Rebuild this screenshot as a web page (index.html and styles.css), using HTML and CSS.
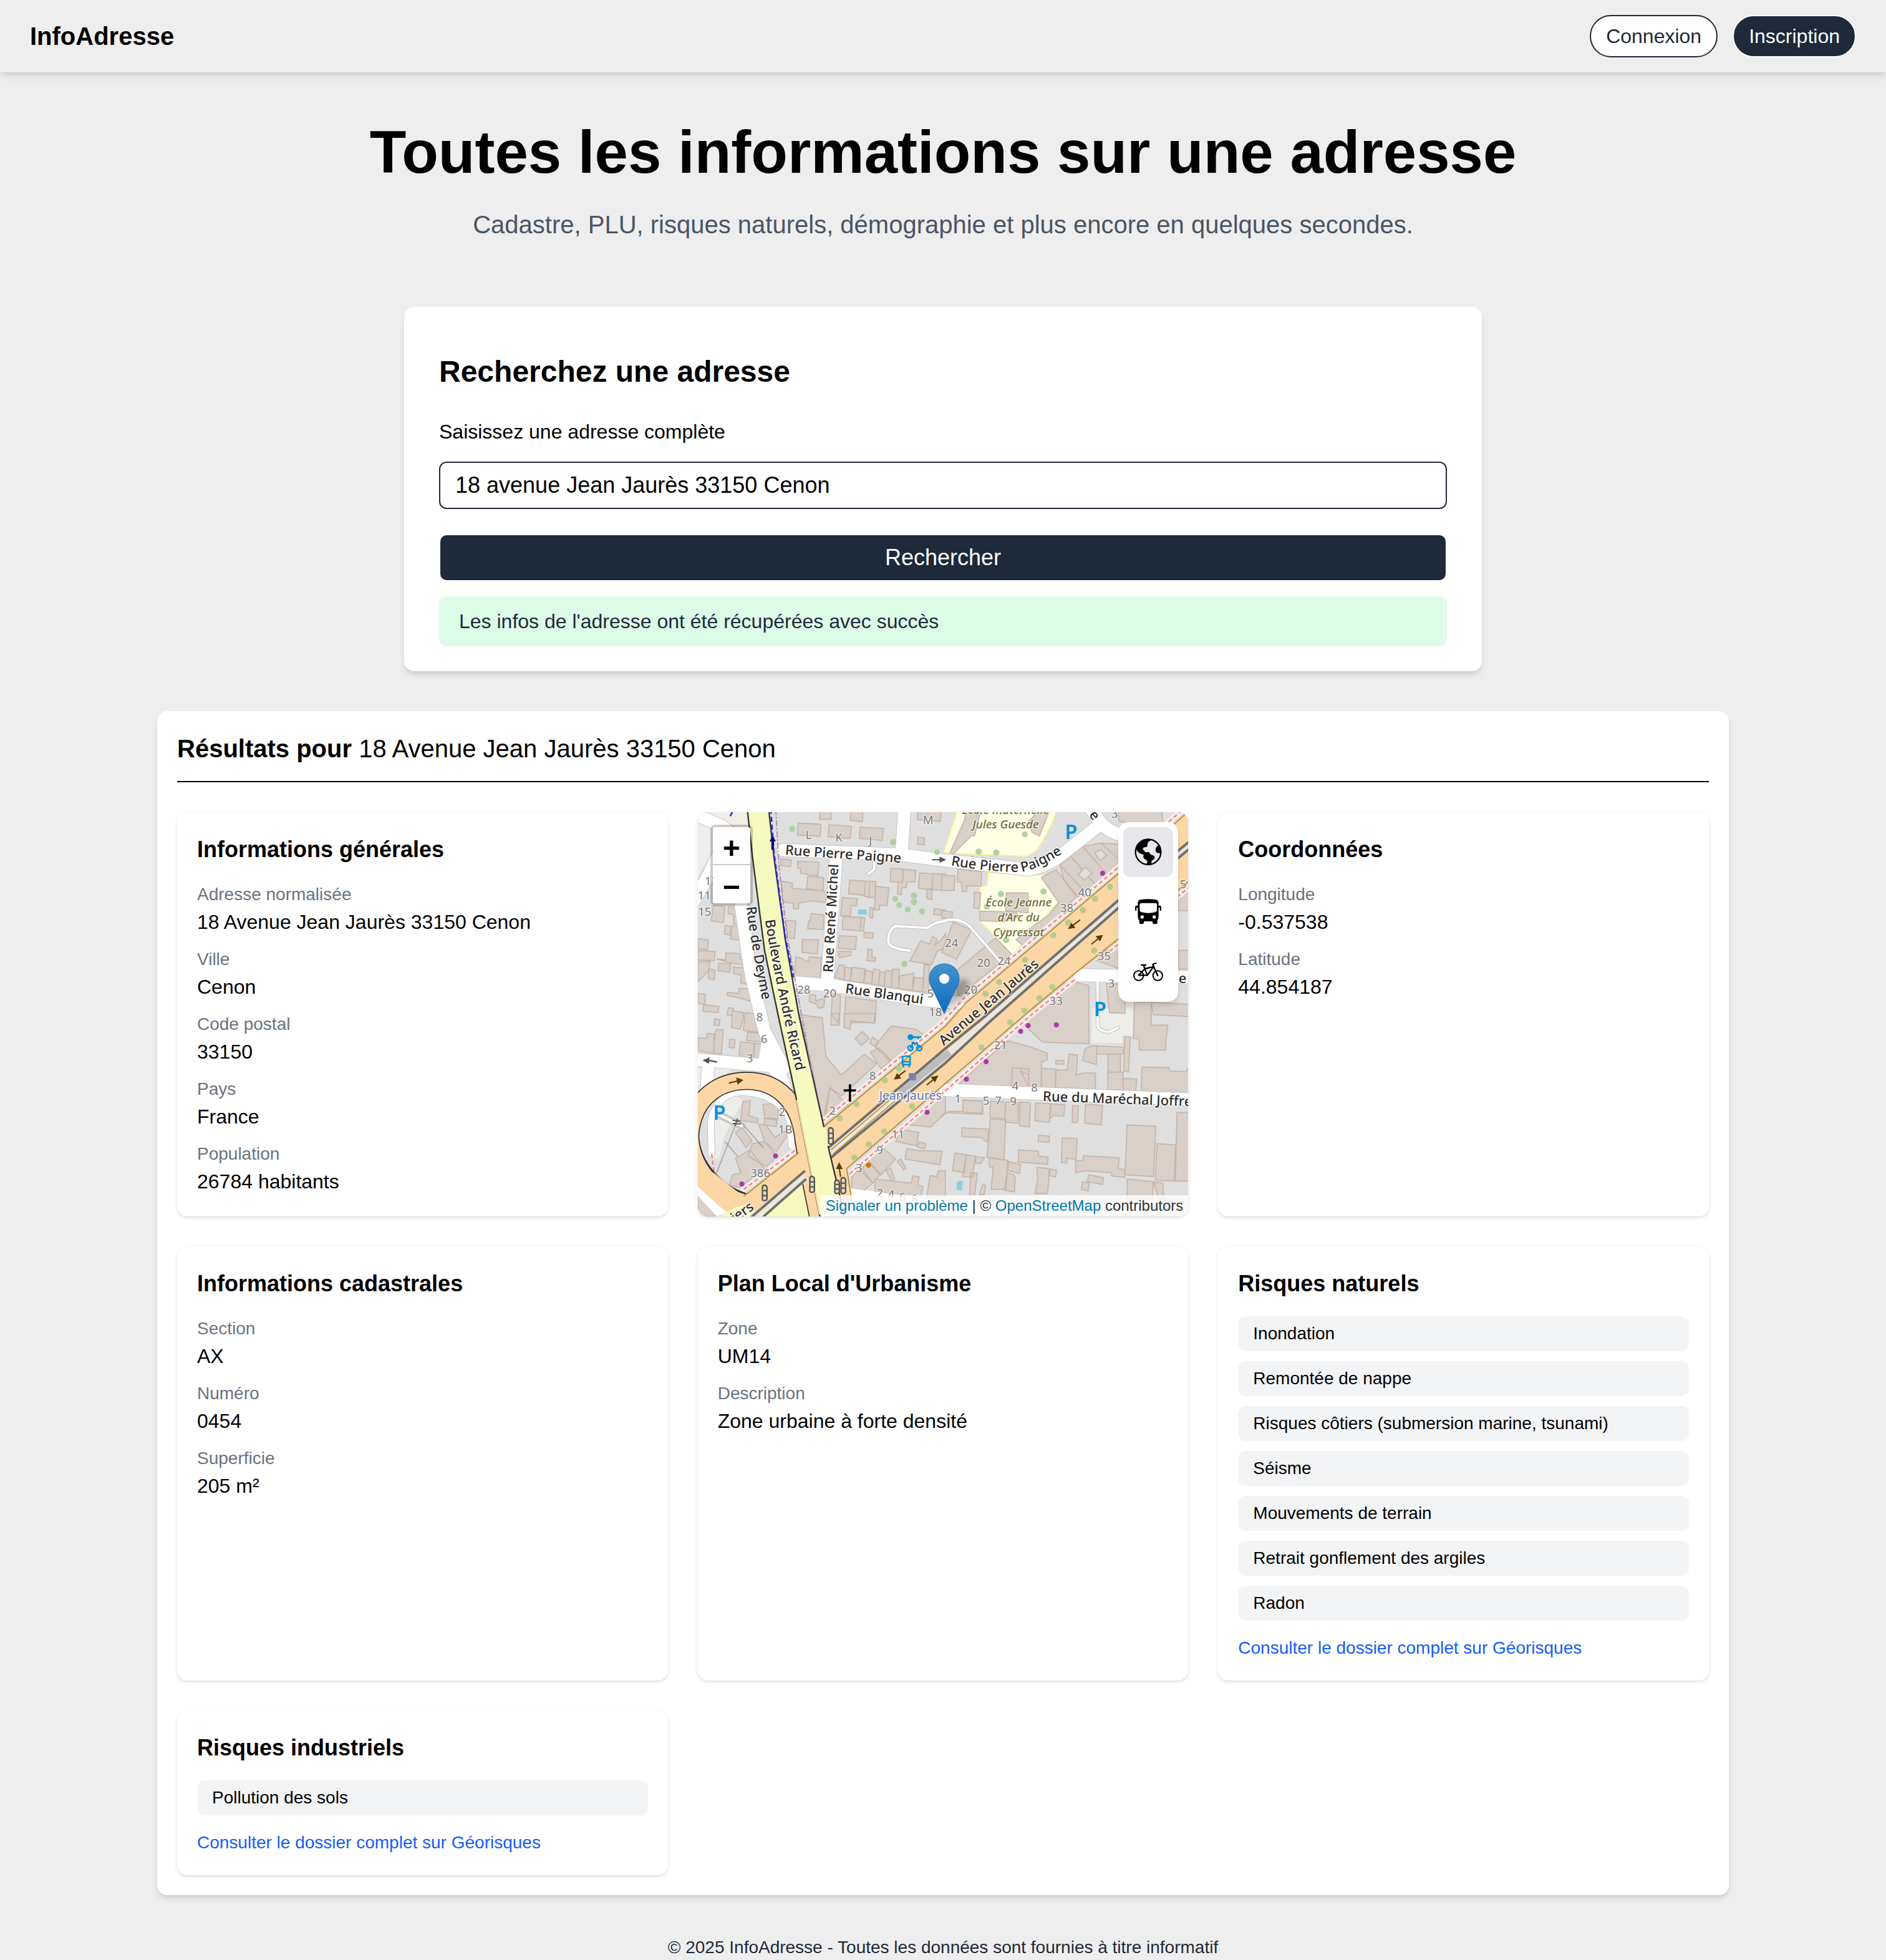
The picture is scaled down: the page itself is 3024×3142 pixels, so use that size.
FILE: index.html
```html
<!DOCTYPE html>
<html lang="fr">
<head>
<meta charset="utf-8">
<meta name="viewport" content="width=device-width, initial-scale=1">
<title>InfoAdresse</title>
<link rel="stylesheet" href="styles.css">
</head>
<body>
<header class="topbar">
  <a class="brand" href="#">InfoAdresse</a>
  <nav class="topbar-actions" aria-label="Compte">
    <button class="pill pill-outline" type="button">Connexion</button>
    <button class="pill pill-solid" type="button">Inscription</button>
  </nav>
</header>

<main class="page">
  <section class="hero">
    <h1>Toutes les informations sur une adresse</h1>
    <p>Cadastre, PLU, risques naturels, démographie et plus encore en quelques secondes.</p>
  </section>

  <section class="search">
    <h2>Recherchez une adresse</h2>
    <form class="search-form">
      <label for="adresse">Saisissez une adresse complète</label>
      <input id="adresse" type="text" value="18 avenue Jean Jaurès 33150 Cenon">
      <button type="submit">Rechercher</button>
    </form>
    <p class="alert" role="status">Les infos de l'adresse ont été récupérées avec succès</p>
  </section>

  <section class="results">
    <h2 class="results-title">Résultats pour <span>18 Avenue Jean Jaurès 33150 Cenon</span></h2>
    <div class="grid">
      <article class="card">
        <h3>Informations générales</h3>
        <dl>
          <div><dt>Adresse normalisée</dt><dd>18 Avenue Jean Jaurès 33150 Cenon</dd></div>
          <div><dt>Ville</dt><dd>Cenon</dd></div>
          <div><dt>Code postal</dt><dd>33150</dd></div>
          <div><dt>Pays</dt><dd>France</dd></div>
          <div><dt>Population</dt><dd>26784 habitants</dd></div>
        </dl>
      </article>

      <article class="card map">
        <svg class="map-canvas" viewBox="9 36 2361 1944" preserveAspectRatio="xMidYMid slice" aria-label="Plan du quartier">
          <defs>
            <path id="paigne" d="M1226 292Q1400 322 1562 324Q1650 314 1830 190"/>
            <path id="deyme" d="M243 492Q270 710 330 990"/>
            <path id="ricard" d="M333 555Q380 860 500 1360"/>
            <filter id="soft" x="-50%" y="-50%" width="200%" height="200%"><feGaussianBlur stdDeviation="12"/></filter>
          </defs>
          <rect x="0" y="0" width="2400" height="2000" fill="#dfdfdf"/>
          <path fill="#eee" d="M0 36H60L140 100 60 260 0 360Z"/>
          <path fill="#f2eee7" d="M60 36H250L262 130H180Z"/>
          <path fill="#ededea" d="M1905 980H2102V1110H2050V1145H1902ZM10 1265H75L60 1400H10ZM75 1265H180L60 1370ZM75 1480Q100 1400 190 1395L225 1425 135 1600 110 1705 60 1690Z"/>

          <!-- schools -->
          <g fill="#ffffe5" stroke="#f7f58c" stroke-width="5">
            <path d="M1257 30H1735Q1700 130 1652 200Q1620 245 1580 248L1192 232Z"/>
            <path d="M1407 325L1692 340L1755 450L1522 722L1367 560V390H1400Z"/>
          </g>

          <!-- buildings -->
          <g fill="#d9d0c9" stroke="#c6b5aa" stroke-width="5">
            <path d="M598 20H650V70H594ZM745 20H804L800 82 742 74ZM492 88L602 94 598 152 488 146ZM640 96L748 104 742 162 636 154ZM790 108L902 114 896 172 786 162ZM1065 20H1180L1175 80 1065 72ZM1068 156L1100 160 1098 193 1066 190Z"/>
            <path d="M408 260L458 266 455 298 406 292ZM490 272L592 276 586 342 504 330 502 306 488 304ZM538 344L615 350 612 414 532 404ZM412 368L464 376 462 402 612 414 628 418 622 470 552 462 494 474V500H470L468 474 418 468Z"/>
            <path d="M740 362L816 368 810 436 734 428ZM816 368H838L832 446 810 440ZM838 368L864 370 862 446H832ZM866 392L928 400 920 486 884 482 882 506H858ZM704 446L776 452 772 486 746 484 744 536 696 534ZM838 494L854 498 850 546 834 540ZM708 538L794 542 790 606 704 600ZM794 542L812 544 806 608 790 606ZM810 614L854 618 850 642 808 640ZM690 630L772 634 768 696 684 690ZM684 706H746V724L690 736ZM828 694L848 698 846 732 864 736 862 754 822 750Z"/>
            <path d="M938 306L996 310 994 374 934 370ZM998 310L1058 316 1054 370 1016 372 1012 398 990 400 988 432 970 430 972 374 994 374ZM1076 328L1140 332 1136 410 1070 402ZM1140 332H1200V410H1136ZM1112 410L1136 400 1134 456 1110 450ZM1146 500L1200 506V534L1144 528ZM1082 654L1124 670 1138 634 1160 646 1150 674 1180 650 1200 620V690L1160 706 1134 770 1028 752Z"/>
            <path d="M554 524L616 530 612 600 538 596 542 560H550ZM434 556L480 560 474 644 440 640ZM512 648L590 650 584 718 510 710ZM480 732L514 740 526 754 544 750 546 732 604 736 598 836 474 828Z"/>
            <path d="M690 770L716 774 712 842 668 830ZM718 782L748 786 742 850 712 844ZM752 782L814 790 806 856 742 850ZM816 796L850 802 846 862 808 856ZM854 790L884 794 878 870 846 862ZM886 804L910 806 906 872 878 870ZM912 796L944 800 940 880 906 874ZM946 790L978 792 974 884 940 880ZM980 824L1048 810 1040 894 974 884ZM1052 830L1096 836 1090 900 1040 894ZM1098 770H1124L1116 902H1090Z"/>
            <path d="M82 486L140 490 132 568 74 558ZM156 490L226 494 222 540 206 576 182 572 180 528 154 524ZM140 580L170 586 164 628 138 622ZM172 582L244 590 240 656 166 646ZM10 644L60 650 56 698 10 692ZM10 700L92 706 88 750 10 746ZM110 762L168 766 162 806 106 798ZM10 754H68L62 800 10 850ZM62 790L92 794 88 842 60 836ZM100 742L144 746V712L212 716V742L240 746 236 770 174 762ZM180 780L276 790 270 866 216 858 218 820 182 812ZM10 908L46 912 42 960 10 955ZM36 962L110 970 106 1000 34 994ZM208 884L284 886V950L180 922 150 918 152 902 206 908ZM156 976L182 980 178 1016 150 1010Z"/>
            <path d="M548 912L576 916V944L620 930 616 972 590 980 580 960 544 946ZM656 912L696 916 690 1060H648ZM720 924L868 944 862 1048H714Z"/>
            <path d="M90 1030L116 1034 112 1062 86 1060ZM176 990L230 1000 226 1040 212 1080 170 1070ZM238 1000L320 1010 316 1096 228 1086ZM248 1094L326 1102 322 1140 244 1134ZM162 1128L188 1130 184 1170 160 1168ZM214 1140L280 1146 276 1220 208 1210ZM284 1148L346 1152 340 1226 276 1220ZM100 1080L132 1084 122 1200 86 1196 88 1110ZM54 1100L92 1104 84 1194 10 1184V1120L50 1124Z"/>
            <path d="M498 1010L608 1024 625 1210 700 1300 810 1200 870 1246 700 1400 645 1360 610 1530 560 1270ZM650 1005H690L682 1050ZM714 1005H862L856 1050 744 1040 742 1082 712 1070ZM800 1090L834 1124 796 1158 766 1124ZM850 1118L880 1140 862 1166 836 1146ZM940 1064L1060 1080 1100 1110 940 1240 860 1160ZM840 1190L880 1170 940 1230 890 1270ZM645 1360L745 1460 612 1560Z"/>
            <path d="M1300 30H1370L1340 150H1325L1240 235 1222 230 1290 80ZM1600 80L1650 30H1700L1652 150 1615 130ZM2030 30H2240L2250 110 2035 80Z"/>
            <path d="M1260 310L1374 322 1372 392 1304 390 1302 418 1280 416 1278 374 1258 370ZM1182 340L1246 342 1242 412 1182 414ZM1340 420L1370 424 1364 500 1336 496ZM1492 424H1598V520L1490 510ZM1366 512L1540 516 1550 540 1480 562 1366 558ZM1238 564L1326 602 1254 744 1182 710ZM1442 640L1518 720 1262 920 1250 800ZM1662 350L1732 312 1830 440 1660 620 1590 690 1540 650 1640 570 1700 530 1745 470ZM1752 290L1860 200 1950 184 2040 190V300L1850 460 1770 360ZM1182 510L1236 516 1230 545H1182Z"/>
            <path fill="none" d="M1752 290L1880 430M1800 245L1930 395M1860 200L1990 350M1950 184L2040 270"/>
            <path fill="#dfdfdf" d="M1838 338L1872 300 1905 330 1868 362ZM1918 232L1948 216 1975 244 1945 268Z"/>
            <path d="M1930 750L2000 660H2040V790ZM1690 870L1830 855 1890 870V1010L1890 1150 1668 1142 1580 1060ZM1974 860L2064 864V1004L1990 1000ZM2110 950H2190V1060H2270L2260 1140V1180H2132V1125H2104ZM2320 420H2370V510H2320ZM2320 700H2370V790H2320ZM2190 950L2370 960V1018L2200 1010Z"/>
            <path d="M1500 1135L1612 1166 1690 1195V1225L1662 1240V1360L1265 1345 1290 1320 1370 1245ZM1522 1266L1602 1270 1600 1358 1518 1350ZM1562 1280L1600 1300V1356ZM1730 1230H1770V1248H1732ZM1662 1268L1732 1272 1728 1362H1660ZM1732 1276H1786L1795 1200 1836 1204 1830 1300 1862 1290H1922V1368L1730 1360ZM1872 1175L1898 1160H1928V1220L1926 1250 1860 1230ZM1928 1160L2058 1166 2054 1200H1928ZM1982 1200H2042V1286H1982ZM1982 1286H2054V1372L1980 1370ZM2062 1116L2090 1118 2080 1286 2058 1280ZM2056 1316L2120 1320 2116 1376H2054ZM2146 1262L2276 1264 2280 1280 2354 1284 2370 1266V1386L2142 1378Z"/>
            <path d="M1182 1500L1216 1475H1284V1420L1380 1424V1490L1184 1480ZM1284 1422L1380 1426 1376 1484 1286 1478ZM1416 1426L1490 1430 1486 1510 1414 1504ZM1490 1430L1554 1434 1548 1532 1488 1526ZM1560 1430L1610 1434 1604 1550 1556 1544ZM1634 1434L1706 1438 1700 1528 1630 1520ZM1708 1438L1774 1444 1770 1498 1720 1494 1702 1510ZM1812 1446L1840 1450 1836 1528H1810ZM1874 1440L1956 1446 1950 1540 1870 1532ZM1280 1554L1408 1560 1404 1624 1370 1600 1278 1596ZM1416 1512L1490 1516 1482 1708 1400 1696ZM1648 1590L1700 1594V1624L1646 1620ZM1762 1602L1834 1606 1828 1706 1784 1700V1724L1758 1720ZM1552 1660L1648 1666V1690L1694 1694 1692 1730 1550 1718ZM1864 1688L2036 1698 2032 1750 2062 1754V1792L2000 1786V1770L1870 1760 1826 1770V1712H1862ZM2074 1540L2212 1546 2202 1788 2064 1780ZM2218 1630L2308 1636 2300 1810 2210 1806ZM2314 1480H2370V1810H2306Z"/>
            <path d="M1246 1676L1300 1682 1290 1770 1234 1760ZM1302 1684L1344 1690 1330 1792 1282 1788ZM1344 1692L1388 1698 1370 1726 1344 1722ZM1412 1700L1500 1710 1492 1850 1420 1850 1430 1744 1410 1740ZM1504 1716L1562 1730 1556 1774 1500 1760ZM1496 1770L1530 1780 1536 1800 1532 1862 1484 1854ZM1640 1744L1700 1750 1692 1870 1632 1870 1644 1800ZM1706 1752L1734 1756 1730 1790 1700 1784ZM1890 1780L1960 1794 1956 1826 1882 1812ZM1860 1812L1892 1820 1886 1858 1854 1850ZM2074 1800L2200 1812 2196 1900H2074ZM2202 1814L2246 1820 2250 1900H2226ZM1322 1770L1354 1774 1340 1880H1316ZM1380 1824L1394 1830 1386 1876H1362Z"/>
            <path d="M225 1428L262 1424 255 1496 300 1510 296 1530 216 1518ZM322 1440L398 1436 394 1510 332 1506ZM330 1508L390 1516 386 1548 328 1540ZM302 1536L336 1540 380 1600 430 1570 434 1600 386 1668 330 1620ZM190 1576L222 1552 270 1616 242 1650ZM272 1630L330 1620 390 1690 340 1740 250 1690ZM190 1700L260 1660 330 1750 210 1840 160 1830 176 1780 216 1770ZM10 1870L100 1950 90 1980H10Z"/>
            <path d="M1200 1480L1130 1550 1030 1540 1110 1460 1200 1385ZM980 1560L1072 1576 1062 1640 962 1620ZM1074 1622L1108 1632 1098 1656 1066 1646ZM1014 1654L1074 1664 1184 1666 1174 1732 1006 1704ZM986 1704L1010 1748 1000 1756 968 1716ZM900 1650L960 1704 890 1780 830 1710ZM826 1712L886 1780 850 1820 800 1750ZM786 1750L850 1820 800 1860H750V1790ZM916 1760L936 1746 956 1800 940 1810ZM862 1800L1036 1820 1044 1784 1074 1790 1068 1830 1092 1836 1080 1890 860 1860ZM1126 1784L1160 1788 1166 1760H1200V1880L1110 1890Z"/>
          </g>

          <!-- small streets -->
          <g fill="none" stroke="#c9c6c3" stroke-linecap="round" stroke-linejoin="round">
            <path stroke-width="18" d="M1200 560Q1160 560 1115 592L960 584Q925 600 925 660Q930 692 1030 702M1200 556Q1280 540 1330 600L1462 752M858 270V310L830 332M1932 850V1060Q1940 1092 1990 1092L2030 1072"/>
            <path stroke-width="66" d="M1004 20L990 215M675 250L630 870M470 855L660 870L1100 940L1262 952M205 400L262 800Q300 960 330 1090L410 1240M-10 1225L430 1262M58 1270L50 1400M1200 1372L2400 1418M1850 820L2400 830"/>
            <path stroke-width="66" d="M420 218L980 240L1182 266L1600 312Q1680 300 1760 240L1950 90L1900 20M1950 90Q2010 150 2080 150M-20 40L120 100L160 130L60 340L-20 480"/>
            <path stroke-width="36" d="M75 1680L72 1520Q90 1440 150 1400Q200 1370 290 1390Q420 1420 455 1530L460 1640M110 1490L220 1545"/>
          </g>
          <g fill="none" stroke="#fff" stroke-linecap="round" stroke-linejoin="round">
            <path stroke-width="11" d="M1200 560Q1160 560 1115 592L960 584Q925 600 925 660Q930 692 1030 702M1200 556Q1280 540 1330 600L1462 752M858 270V310L830 332M1932 850V1060Q1940 1092 1990 1092L2030 1072"/>
            <path stroke-width="60" d="M1004 20L990 215M675 250L630 870M470 855L660 870L1100 940L1262 952M205 400L262 800Q300 960 330 1090L410 1240M-10 1225L430 1262M58 1270L50 1400M1200 1372L2400 1418M1850 820L2400 830"/>
            <path stroke-width="60" d="M420 218L980 240L1182 266L1600 312Q1680 300 1760 240L1950 90L1900 20M1950 90Q2010 150 2080 150M-20 40L120 100L160 130L60 340L-20 480"/>
            <path stroke-width="30" d="M75 1680L72 1520Q90 1440 150 1400Q200 1370 290 1390Q420 1420 455 1530L460 1640"/>
            <path stroke-width="14" d="M110 1490L220 1545"/>
          </g>
          <path fill="#fff" d="M330 1050L420 1250 470 1400 365 1300 300 1240ZM740 1845L1200 1905 1500 1960V2000H740ZM0 1800Q60 1900 150 1960L100 1980 0 1870Z"/>

          <!-- avenue -->
          <g fill="none" stroke="#f4efeb" stroke-width="26">
            <path d="M205 1870L505 1640M605 1525L1185 1048L1290 930L2010 320L2400 -30M740 1775L1235 1345L1620 1005L1830 835M1990 705L2400 375"/>
          </g>
          <g fill="none" stroke="#fb8a86" stroke-width="8" stroke-dasharray="20 12">
            <path d="M205 1870L505 1640M605 1525L1185 1048L1290 930L2010 320L2400 -30M740 1775L1235 1345L1620 1005L1830 835M1990 705L2400 375M76 1680L90 1790 160 1860 210 1880"/>
          </g>
          <path fill="#f7fabf" d="M120 1980L300 1900 520 1790 560 1990H120Z"/>
          <path fill="#fcd6a4" stroke="#b8913c" stroke-width="6" d="M230 1883L520 1655L620 1545L1200 1065L1302 950L2027 335L2400 5V345L2032 645L1812 820L1612 985L1212 1330L725 1750L750 1900H560L520 1780L270 1980L100 1900Z"/>
          <path fill="none" stroke="#333" stroke-width="88" d="M230 1910C100 1870 -25 1740 -28 1590C-15 1400 120 1328 245 1328C400 1328 490 1440 512 1570C530 1700 550 1800 590 1990"/>
          <path fill="none" stroke="#fcd6a4" stroke-width="78" d="M240 1915C90 1880 -25 1740 -28 1590C-15 1400 120 1328 245 1328C400 1328 490 1440 512 1570C530 1700 550 1800 590 1990"/>
          <path fill="#fcd6a4" d="M85 1770L232 1886L516 1660L545 1770L280 1978L150 1960L0 1830V1740Z"/>
          <path fill="none" stroke="#b8913c" stroke-width="5" d="M230 1883L495 1672"/>
          <path fill="#f7fabf" d="M115 1982L190 1935L250 1925L290 1960L270 1990H115Z"/>
          <g fill="none">
            <path stroke="#ece6db" stroke-width="34" d="M270 1985L530 1790M650 1670L1200 1210L1400 1035L2032 478L2400 175"/>
            <path stroke="#b8913c" stroke-width="5" d="M650 1660L1190 1200M660 1680L1190 1225"/>
            <path stroke="#bdbdbd" stroke-width="34" d="M985 1380L1220 1190"/>
            <path stroke="#707070" stroke-width="12" d="M265 1985L525 1760M320 1985L530 1800M640 1648L1200 1172L1382 1025L2032 460L2400 155M650 1697L1200 1242L1412 1045L2036 493L2400 190"/>
          </g>

          <!-- boulevard -->
          <path fill="#f7fabf" stroke="#333" stroke-width="7" d="M247 20L272 250L330 700L395 1010L480 1400L600 2000H715L690 1870L640 1660L610 1525L495 1010L430 650L375 250L350 20Z"/>
          <path fill="none" stroke="#f7fabf" stroke-width="12" d="M488 1420L598 1970M616 1550L638 1640"/>
          <path fill="none" stroke="#fcd6a4" stroke-width="6" d="M486 1420L596 1970"/>
          <path fill="none" stroke="#2a2ae0" stroke-width="8" stroke-dasharray="24 14" d="M360 20L375 230L430 640L470 830M165 55L178 30"/>
          <path fill="none" stroke="#b48fb8" stroke-width="6" stroke-dasharray="30 8 8 8" d="M384 20L400 300L440 640L480 860L560 1290"/>
          <path fill="#00007f" d="M369 148L384 176H375V216H363V176H354Z"/>

          <!-- trees, pools, shops -->
          <g fill="#aed1a0">
            <circle cx="463" cy="116" r="15"/><circle cx="949" cy="180" r="15"/><circle cx="1160" cy="228" r="14"/><circle cx="959" cy="453" r="14"/><circle cx="978" cy="483" r="14"/><circle cx="1049" cy="437" r="15"/><circle cx="1049" cy="468" r="15"/><circle cx="1019" cy="504" r="14"/><circle cx="1088" cy="513" r="15"/><circle cx="1002" cy="766" r="15"/><circle cx="1582" cy="142" r="14"/><circle cx="1360" cy="226" r="15"/><circle cx="1445" cy="230" r="15"/><circle cx="1467" cy="430" r="15"/><circle cx="1672" cy="418" r="15"/><circle cx="1400" cy="490" r="15"/><circle cx="1492" cy="650" r="15"/>
          </g>
          <g fill="#b8cb8e">
            <circle cx="1992" cy="395" r="15"/><circle cx="1920" cy="453" r="15"/><circle cx="1861" cy="507" r="15"/><circle cx="1791" cy="567" r="15"/><circle cx="1719" cy="628" r="15"/><circle cx="1916" cy="701" r="15"/><circle cx="1583" cy="746" r="15"/><circle cx="1459" cy="853" r="15"/><circle cx="1393" cy="910" r="15"/><circle cx="1714" cy="877" r="15"/><circle cx="1652" cy="930" r="15"/><circle cx="1580" cy="990" r="15"/><circle cx="1512" cy="1047" r="15"/><circle cx="1374" cy="1167" r="15"/><circle cx="976" cy="1268" r="15"/><circle cx="909" cy="1325" r="15"/><circle cx="773" cy="1439" r="15"/><circle cx="692" cy="1508" r="15"/><circle cx="1040" cy="1451" r="15"/><circle cx="905" cy="1571" r="15"/><circle cx="832" cy="1633" r="15"/><circle cx="762" cy="1698" r="15"/>
          </g>
          <path fill="#8bd0e2" d="M780 504H822V528H780ZM1256 1812L1284 1808 1280 1856 1252 1852Z"/>
          <g fill="#ac39ac">
            <circle cx="1956" cy="330" r="12"/><circle cx="1562" cy="1090" r="12"/><circle cx="1598" cy="1062" r="12"/><circle cx="1734" cy="1059" r="12"/><circle cx="1396" cy="1236" r="12"/><circle cx="1301" cy="1320" r="12"/><circle cx="1112" cy="1479" r="12"/><circle cx="383" cy="1689" r="12"/><circle cx="221" cy="1824" r="12"/>
          </g>
          <circle cx="830" cy="1733" r="12" fill="#cb7000"/>

          <!-- direction arrows -->
          <g fill="#583c00" stroke="#583c00" stroke-width="6">
            <path d="M1848 554L1810 583M1902 671L1938 642M1008 1279L972 1306M1110 1348L1146 1319M158 1339L198 1329M696 1790L690 1750"/>
            <path stroke="none" d="M1790 598L1806 568L1826 592ZM1958 626L1944 658L1922 632ZM952 1322L968 1290L988 1316ZM1166 1302L1150 1336L1130 1310ZM228 1324L194 1312L200 1346ZM689 1719L674 1752L706 1752Z"/>
          </g>
          <path fill="#555" d="M1136 262H1172V250L1204 265 1172 280V268H1136ZM32 1229L66 1214 64 1226 102 1234 100 1241 64 1234 62 1246Z"/>

          <!-- signals, church, stops -->
          <g fill="#e8d9b8" stroke="#555" stroke-width="7">
            <path d="M638 1566Q638 1554 648 1554T660 1566V1620Q660 1632 648 1632T638 1620ZM548 1800Q548 1788 558 1788T570 1800V1852Q570 1864 558 1864T548 1852ZM320 1842Q320 1830 330 1830T342 1842V1892Q342 1904 330 1904T320 1892ZM698 1806Q698 1794 708 1794T720 1806V1858Q720 1870 708 1870T698 1858ZM668 1818Q668 1806 678 1806T690 1818V1858Q690 1870 678 1870T668 1858Z"/>
            <path d="M638 1580H660M638 1604H660M548 1814H570M548 1838H570M320 1856H342M320 1880H342M698 1820H720M698 1844H720M668 1826H690M668 1848H690"/>
          </g>
          <path fill="none" stroke="#000" stroke-width="11" d="M741 1345V1428M711 1374H770"/>
          <path fill="none" stroke="#555" stroke-width="6" d="M176 1518L214 1522M178 1532L216 1536M188 1545L200 1510"/>
          <path fill="none" stroke="#999" stroke-width="4" d="M140 1620L200 1690M186 1550L96 1780M215 1525L325 1650"/>
          <g fill="none" stroke="#0092da" stroke-width="8">
            <circle cx="1032" cy="1171" r="12"/><circle cx="1074" cy="1171" r="12"/><path d="M1032 1171L1044 1148H1064L1074 1171M1038 1144H1050M1062 1140V1150M1040 1118H1084M1070 1118V1128"/>
            <path d="M994 1212Q1012 1206 1030 1212V1250H994ZM994 1236H1030M998 1252V1264M1026 1252V1264"/>
          </g>
          <circle cx="1032" cy="1118" r="14" fill="#0092da"/>
          <path fill="#7a80b5" d="M1024 1291H1059V1325H1024Z"/>

          <g class="map-parking"><text x="1774" y="166">P</text><text x="1914" y="1018">P</text><text x="82" y="1515">P</text></g>
          <g class="map-number">
            <text x="1092" y="94">M</text><text x="527" y="166">L</text><text x="670" y="176">K</text><text x="832" y="192">J</text>
            <text x="42" y="386">13</text><text x="8" y="455">11</text><text x="10" y="533">15</text>
            <text x="487" y="909">28</text><text x="612" y="927">20</text><text x="1112" y="926">5</text><text x="1120" y="1016">18</text>
            <text x="1998" y="64">3</text><text x="1838" y="440">40</text><text x="1752" y="516">38</text><text x="1198" y="684">24</text><text x="1352" y="780">20</text><text x="1450" y="772">24</text><text x="1290" y="910">20</text><text x="1932" y="748">35</text><text x="1982" y="880">3</text><text x="1700" y="964">33</text><text x="2328" y="402">5</text>
            <text x="290" y="1042">8</text><text x="312" y="1145">6</text><text x="243" y="1238">3</text><text x="398" y="1498">2</text><text x="396" y="1582">1B</text><text x="262" y="1792">386</text><text x="834" y="1322">8</text><text x="640" y="1490">2</text><text x="940" y="1605">11</text><text x="868" y="1680">9</text><text x="768" y="1768">3</text><text x="868" y="1888">2</text><text x="924" y="1894">4</text><text x="978" y="1904">6</text><text x="1036" y="1914">8</text>
            <text x="1434" y="1175">21</text><text x="1520" y="1372">4</text><text x="1612" y="1380">8</text><text x="1244" y="1434">1</text><text x="1380" y="1442">5</text><text x="1438" y="1442">7</text><text x="1510" y="1446">9</text>
          </g>
          <g class="map-street">
            <text transform="translate(428 240) rotate(4)">Rue Pierre Paigne</text>
            <text><textPath href="#paigne">Rue Pierre Paigne</textPath></text>
            <text transform="translate(658 808) rotate(-87)">Rue René Michel</text>
            <text><textPath href="#deyme">Rue de Deyme</textPath></text>
            <text><textPath href="#ricard">Boulevard André Ricard</textPath></text>
            <text transform="translate(716 906) rotate(8)">Rue Blanqui</text>
            <text transform="translate(1192 1160) rotate(-40)">Avenue Jean Jaurès</text>
            <text transform="translate(1668 1425) rotate(2)">Rue du Maréchal Joffre</text>
            <text transform="translate(188 2010) rotate(-35)">iers</text>
            <text x="2322" y="858">e</text>
            <text transform="translate(1888 50) rotate(50)">e</text>
          </g>
          <g class="map-school">
            <text x="1490" y="46">École maternelle</text><text x="1490" y="115">Jules Guesde</text>
            <text x="1552" y="489">École Jeanne</text><text x="1552" y="562">d'Arc du</text><text x="1552" y="633">Cypressat</text>
          </g>
          <text class="map-station" x="882" y="1418">Jean Jaurès</text>
          <path fill="#000" opacity=".28" filter="url(#soft)" d="M1190 1000L1240 870Q1280 820 1310 850Q1320 890 1280 930Z"/>
        </svg>

        <svg class="marker" viewBox="0 0 50 82" aria-hidden="true">
          <defs><linearGradient id="pin" x2="0" y2="1"><stop offset="0" stop-color="#4294d0"/><stop offset=".7" stop-color="#1d75c4"/><stop offset="1" stop-color="#126fc6"/></linearGradient></defs>
          <path fill="url(#pin)" stroke="#2e78b0" stroke-width="1" d="M25 1C11 1 1 11 1 25c0 8 3 13 6 18l18 38 18-38c3-5 6-10 6-18C49 11 39 1 25 1z"/>
          <circle cx="25" cy="25" r="8" fill="#fff"/>
        </svg>

        <div class="zoom">
          <button type="button" aria-label="Zoom avant">+</button>
          <button type="button" aria-label="Zoom arrière">−</button>
        </div>

        <div class="layers">
          <button class="active" type="button" aria-label="Carte">
            <svg viewBox="36 36 144 144"><circle cx="108" cy="107" r="61" fill="#e5e7eb" stroke="#000" stroke-width="7"/><path d="M49 90Q60 50 108 46L128 50Q110 54 107 62Q103 72 104 82L84 86Q80 94 86 100L92 102 90 108H112L118 118 136 126Q142 134 136 142L124 150V166H100Q104 158 104 150L90 140Q82 134 86 120Q58 116 49 90ZM158 74L148 82Q140 98 146 108Q154 116 168 112V96Q166 82 158 74Z"/></svg>
          </button>
          <button type="button" aria-label="Transports en commun">
            <svg viewBox="36 39 144 144"><path fill-rule="evenodd" d="M70 52Q108 46 146 52Q156 54 158 66V80H166Q171 82 171 88V102Q171 105 168 105T164 102V90H158V132Q157 146 152 152V162Q152 169 145 169H136Q130 169 129 162V156H87V162Q86 169 80 169H72Q65 169 65 162V152Q59 146 58 132V90H52V102Q52 105 49 105T45 102V88Q45 82 50 80H58V66Q60 54 70 52ZM76 68Q67 68 67 76V100Q67 110 76 112Q108 120 142 112Q150 110 150 100V76Q150 68 142 68ZM71 135A8 8 0 1 0 87 135A8 8 0 1 0 71 135ZM129 135A8 8 0 1 0 145 135A8 8 0 1 0 129 135Z"/></svg>
          </button>
          <button type="button" aria-label="Vélo">
            <svg viewBox="36 327 144 144"><g fill="none" stroke="#000" stroke-width="6" stroke-linejoin="round" stroke-linecap="round"><circle cx="62" cy="417" r="23"/><circle cx="154" cy="417" r="23"/><path stroke-width="7" d="M76 366H96M86 368L104 415H62L92 384L134 374L104 415M154 417L130 364L136 360L145 357"/></g></svg>
          </button>
        </div>

        <p class="attribution"><a href="#">Signaler un problème</a> | © <a href="#">OpenStreetMap</a> contributors</p>
      </article>

      <article class="card">
        <h3>Coordonnées</h3>
        <dl>
          <div><dt>Longitude</dt><dd>-0.537538</dd></div>
          <div><dt>Latitude</dt><dd>44.854187</dd></div>
        </dl>
      </article>

      <article class="card">
        <h3>Informations cadastrales</h3>
        <dl>
          <div><dt>Section</dt><dd>AX</dd></div>
          <div><dt>Numéro</dt><dd>0454</dd></div>
          <div><dt>Superficie</dt><dd>205 m²</dd></div>
        </dl>
      </article>

      <article class="card">
        <h3>Plan Local d'Urbanisme</h3>
        <dl>
          <div><dt>Zone</dt><dd>UM14</dd></div>
          <div><dt>Description</dt><dd>Zone urbaine à forte densité</dd></div>
        </dl>
      </article>

      <article class="card">
        <h3>Risques naturels</h3>
        <ul class="risks">
          <li>Inondation</li>
          <li>Remontée de nappe</li>
          <li>Risques côtiers (submersion marine, tsunami)</li>
          <li>Séisme</li>
          <li>Mouvements de terrain</li>
          <li>Retrait gonflement des argiles</li>
          <li>Radon</li>
        </ul>
        <a class="more" href="#">Consulter le dossier complet sur Géorisques</a>
      </article>

      <article class="card">
        <h3>Risques industriels</h3>
        <ul class="risks">
          <li>Pollution des sols</li>
        </ul>
        <a class="more" href="#">Consulter le dossier complet sur Géorisques</a>
      </article>
    </div>
  </section>
</main>

<footer class="footer">© 2025 InfoAdresse - Toutes les données sont fournies à titre informatif</footer>
</body>
</html>
```
FILE: styles.css
```css
:root {
  --ink: #1e2939;
  --page: #eee;
  --shadow: 0 8px 12px -2px rgba(0, 0, 0, .1), 0 4px 8px -4px rgba(0, 0, 0, .1);
  --shadow-small: 0 2px 6px rgba(0, 0, 0, .1), 0 2px 4px -2px rgba(0, 0, 0, .1);
}

*, *::before, *::after { box-sizing: border-box; }

body, h1, h2, h3, p, dl, dd, ul { margin: 0; padding: 0; }

body {
  background: var(--page);
  color: #000;
  font-family: "Liberation Sans", Arial, Helvetica, sans-serif;
  font-size: 32px;
  line-height: 48px;
}

a { color: inherit; text-decoration: none; }
button, input { font: inherit; }
button { cursor: pointer; }

.topbar {
  display: flex;
  align-items: center;
  justify-content: space-between;
  padding: 24px 48px;
  box-shadow: var(--shadow);
}
.brand { font-size: 40px; font-weight: 700; line-height: 56px; }
.topbar-actions { display: flex; gap: 24px; }
.pill { padding: 8px 24px; border: 2px solid; border-radius: 34px; }
.pill-outline { background: #fff; border-color: var(--ink); color: var(--ink); }
.pill-solid { background: var(--ink); border-color: #fff; color: #fff; }

.page { display: flex; flex-direction: column; align-items: center; padding-top: 80px; }

.hero { text-align: center; margin-bottom: 104px; }
.hero h1 { font-size: 96px; line-height: 96px; margin-bottom: 40px; }
.hero p { font-size: 40px; line-height: 56px; color: #4a5565; }

.search {
  width: 100%;
  max-width: 1728px;
  margin-bottom: 64px;
  padding: 72px 56px 40px;
  background: #fff;
  border-radius: 16px;
  box-shadow: var(--shadow);
}
.search h2 { font-size: 48px; line-height: 64px; margin-bottom: 40px; }
.search-form { display: flex; flex-direction: column; }
.search-form input {
  margin: 24px 0 40px;
  padding: 8px 24px;
  height: 76px;
  border: 2px solid var(--ink);
  border-radius: 12px;
  background: #fff;
  color: #000;
  font-size: 36px;
  line-height: 56px;
}
.search-form button {
  padding: 8px 24px;
  border: 2px solid #fff;
  border-radius: 12px;
  background: var(--ink);
  color: #fff;
  font-size: 36px;
  line-height: 56px;
}
.alert {
  margin-top: 24px;
  padding: 16px 32px;
  border-radius: 12px;
  background: #dcfce7;
  color: var(--ink);
}

.results {
  width: 83.3333%;
  padding: 32px;
  background: #fff;
  border-radius: 16px;
  box-shadow: var(--shadow);
}
.results-title {
  margin-bottom: 48px;
  padding-bottom: 24px;
  border-bottom: 2px solid #000;
  font-size: 40px;
  line-height: 56px;
}
.results-title span { font-weight: 400; }

.grid { display: grid; grid-template-columns: repeat(3, minmax(0, 1fr)); gap: 48px; }
.card { padding: 32px; border-radius: 16px; background: #fff; box-shadow: var(--shadow-small); }
.card h3 { margin-bottom: 24px; font-size: 36px; line-height: 56px; }
.card dl { display: flex; flex-direction: column; gap: 16px; }
.card dt { color: #6a7282; font-size: 28px; line-height: 40px; }

.risks { display: flex; flex-direction: column; gap: 16px; margin-bottom: 24px; list-style: none; }
.risks li { padding: 8px 24px; border-radius: 12px; background: #f3f4f6; font-size: 28px; line-height: 40px; }
.more { display: block; color: #155dfc; font-size: 28px; line-height: 40px; }

.map { position: relative; overflow: hidden; padding: 0; }
.map-canvas { position: absolute; inset: 0; width: 100%; height: 100%; font-family: "Noto Sans", sans-serif; }
.map-canvas text { paint-order: stroke; stroke-linejoin: round; }
.map-street { font-size: 66px; font-weight: 500; fill: #2b2b2b; stroke: rgba(255, 255, 255, .75); stroke-width: 8px; }
.map-number { font-size: 56px; fill: #777; stroke: rgba(255, 255, 255, .6); stroke-width: 8px; }
.map-school { font-size: 56px; font-style: italic; font-weight: 500; fill: #6f6f35; stroke: rgba(255, 255, 255, .6); stroke-width: 8px; text-anchor: middle; }
.map-station { font-size: 58px; fill: #6672b8; stroke: rgba(255, 255, 255, .8); stroke-width: 10px; }
.map-parking { font-size: 98px; font-weight: 600; fill: #0092da; }

.marker { position: absolute; left: calc(50% - 23px); top: calc(50% - 82px); width: 50px; height: 82px; }

.zoom {
  position: absolute;
  left: 20px;
  top: 20px;
  display: flex;
  flex-direction: column;
  border: 4px solid rgba(0, 0, 0, .2);
  border-radius: 8px;
  background-clip: padding-box;
}
.zoom button {
  width: 60px;
  height: 61px;
  padding: 8px 0 0;
  border: 0;
  background: #fff;
  color: #000;
  font-size: 48px;
  font-weight: 700;
  line-height: 52px;
}
.zoom button:first-child { border-bottom: 2px solid #ccc; border-radius: 4px 4px 0 0; }
.zoom button:last-child { border-radius: 0 0 4px 4px; }

.layers {
  position: absolute;
  top: 16px;
  right: 16px;
  display: flex;
  flex-direction: column;
  gap: 16px;
  padding: 8px;
  border-radius: 16px;
  background: #fff;
  box-shadow: var(--shadow);
}
.layers button { display: grid; place-items: center; width: 80px; height: 80px; padding: 0; border: 0; border-radius: 12px; background: none; }
.layers .active { background: #e5e7eb; }
.layers svg { width: 48px; height: 48px; }

.attribution {
  position: absolute;
  right: 0;
  bottom: 0;
  padding: 0 8px;
  background: rgba(255, 255, 255, .8);
  color: #333;
  font-size: 24px;
  line-height: 34px;
  white-space: nowrap;
}
.attribution a { color: #0078a8; }

.footer { padding-top: 64px; text-align: center; color: var(--ink); font-size: 28px; line-height: 40px; }
```
